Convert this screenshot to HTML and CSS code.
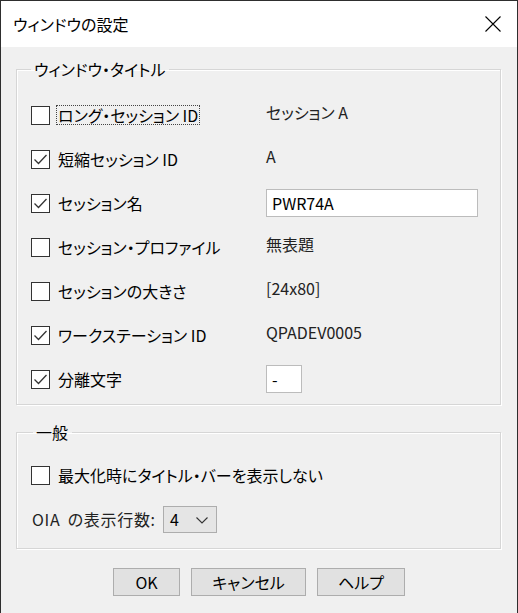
FILE: index.html
```html
<!DOCTYPE html>
<html lang="ja">

<head>
    <meta charset="UTF-8">
    <meta name="viewport" content="width=device-width, initial-scale=1.0">
    <title>ウィンドウの設定</title>
    <link rel="stylesheet" href="styles.css">
</head>

<body>
    <div class="window">
        <div class="titlebar">
            <span class="title">ウィンドウの設定</span>
            <span class="close">
                <svg width="16" height="16" viewBox="0 0 16 16">
                    <path d="M0.5 0.5 L15.5 15.5 M15.5 0.5 L0.5 15.5" stroke="#000" stroke-width="1.1" fill="none" />
                </svg>
            </span>
        </div>

        <div class="content">
            <fieldset class="group group-title">
                <legend>ウィンドウ・タイトル</legend>

                <div class="row">
                    <div class="option">
                        <span class="check"></span>
                        <span class="label focus">ロング・セッション ID</span>
                    </div>
                    <span class="value">セッション A</span>
                </div>
                <div class="row">
                    <div class="option">
                        <span class="check checked"></span>
                        <span class="label">短縮セッション ID</span>
                    </div>
                    <span class="value">A</span>
                </div>
                <div class="row">
                    <div class="option">
                        <span class="check checked"></span>
                        <span class="label">セッション名</span>
                    </div>
                    <span class="field wide">PWR74A</span>
                </div>
                <div class="row">
                    <div class="option">
                        <span class="check"></span>
                        <span class="label">セッション・プロファイル</span>
                    </div>
                    <span class="value">無表題</span>
                </div>
                <div class="row">
                    <div class="option">
                        <span class="check"></span>
                        <span class="label">セッションの大きさ</span>
                    </div>
                    <span class="value">[24x80]</span>
                </div>
                <div class="row">
                    <div class="option">
                        <span class="check checked"></span>
                        <span class="label">ワークステーション ID</span>
                    </div>
                    <span class="value">QPADEV0005</span>
                </div>
                <div class="row">
                    <div class="option">
                        <span class="check checked"></span>
                        <span class="label">分離文字</span>
                    </div>
                    <span class="field small">-</span>
                </div>
            </fieldset>

            <fieldset class="group group-general">
                <legend>一般</legend>

                <div class="row">
                    <div class="option">
                        <span class="check"></span>
                        <span class="label">最大化時にタイトル・バーを表示しない</span>
                    </div>
                </div>
                <div class="row oia">
                    <span class="oia-label">OIA の表示行数:</span>
                    <span class="select">
                        <span>4</span>
                        <svg width="12" height="7" viewBox="0 0 12 7">
                            <path d="M0.5 0.5 L6 6 L11.5 0.5" stroke="#333" stroke-width="1.1" fill="none" />
                        </svg>
                    </span>
                </div>
            </fieldset>

            <div class="buttons">
                <button class="btn btn-ok">OK</button>
                <button class="btn btn-cancel">キャンセル</button>
                <button class="btn btn-help">ヘルプ</button>
            </div>
        </div>
    </div>
</body>

</html>
```

FILE: styles.css
```css
body {
    margin: 0;
    font-family: "Noto Sans CJK JP", "Liberation Sans", sans-serif;
    font-feature-settings: "palt";
    font-size: 16px;
    color: #000;
}
.window {
    width: 518px;
    height: 613px;
    box-sizing: border-box;
    border: 1px solid #2e2e2e;
    border-bottom: none;
    background-color: #f0f0f0;
}
.titlebar {
    height: 46px;
    background-color: #fff;
    display: flex;
    align-items: center;
    justify-content: space-between;
    padding: 0 16px 0 12px;
}
.title {
    font-size: 16px;
    line-height: 20px;
    margin-top: -1px;
}
.close {
    display: flex;
    margin-top: -1px;
}
.content {
    padding: 12px 16px 0 15px;
}
.group {
    margin: 0;
    padding: 14px 0 3px 14px;
    border: 1px solid #d6d6d6;
    box-shadow: inset 1px 1px 0 #fff, 1px 1px 0 #fff;
    min-width: 0;
}
.group legend {
    margin-left: 0;
    padding: 0 4px 0 3px;
    line-height: 20px;
}
.group-general {
    margin-top: 17px;
    padding-top: 11px;
    padding-bottom: 7px;
}
.group-general legend {
    margin-left: 2px;
}
.row {
    display: flex;
    align-items: center;
    height: 44px;
}
.option {
    display: flex;
    align-items: center;
    width: 235px;
    flex-shrink: 0;
}
.group-general .option {
    width: auto;
}
.check {
    width: 19px;
    height: 19px;
    box-sizing: border-box;
    border: 1px solid #333;
    background-color: #fff;
    margin-right: 6px;
}
.check.checked {
    background-image: url("data:image/svg+xml;utf8,<svg xmlns='http://www.w3.org/2000/svg' width='17' height='17' viewBox='0 0 17 17'><path d='M2.5 8.5 L6.5 12.5 L14.5 4' stroke='%23333' stroke-width='1.3' fill='none'/></svg>");
    background-repeat: no-repeat;
}
.label {
    line-height: 18px;
    padding: 0 1px;
    border: 1px solid transparent;
}
.label.focus {
    border: 1px dotted #444;
}
.value {
    line-height: 20px;
    color: #222;
    margin-top: -6px;
}
.field {
    box-sizing: border-box;
    height: 28px;
    background-color: #fff;
    border: 1px solid #bcbcbc;
    padding: 0 5px;
    line-height: 26px;
}
.field.wide {
    width: 212px;
}
.field.small {
    width: 36px;
}
.oia {
    padding-left: 1px;
}
.oia-label {
    width: 131px;
    letter-spacing: 0.7px;
    word-spacing: 3px;
    color: #222;
}
.select {
    box-sizing: border-box;
    width: 54px;
    height: 27px;
    display: flex;
    align-items: center;
    justify-content: space-between;
    padding: 0 8px 0 6px;
    background-color: #e5e5e5;
    border: 1px solid #adadad;
}
.select svg {
    margin-top: 2px;
}
.buttons {
    display: flex;
    justify-content: center;
    gap: 11px;
    margin-top: 19px;
    padding-left: 1px;
}
.btn {
    box-sizing: border-box;
    height: 28px;
    background-color: #e1e1e1;
    border: 1px solid #adadad;
    font-family: inherit;
    font-feature-settings: "palt";
    font-size: 16px;
    color: #000;
    padding: 0;
}
.btn-ok {
    width: 67px;
}
.btn-cancel {
    width: 115px;
}
.btn-help {
    width: 88px;
}
```
